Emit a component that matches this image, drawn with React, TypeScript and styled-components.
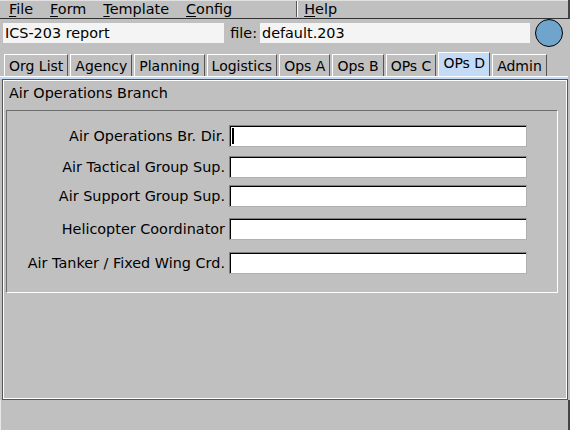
import styled, { createGlobalStyle } from 'styled-components'

const Global = createGlobalStyle`
  html, body {
    margin: 0;
    padding: 0;
    background: #c0c0c0;
  }
  body {
    font-family: "DejaVu Sans", "Liberation Sans", sans-serif;
    font-size: 14.4px;
    color: #000;
  }
`

const menus = [
  { key: 'F', rest: 'ile' },
  { key: 'F', rest: 'orm' },
  { key: 'T', rest: 'emplate' },
  { key: 'C', rest: 'onfig' },
]

const tabs = ['Org List', 'Agency', 'Planning', 'Logistics', 'Ops A', 'Ops B', 'OPs C', 'OPs D', 'Admin']

const fields = [
  { label: 'Air Operations Br. Dir.', top: 14, focus: true },
  { label: 'Air Tactical Group Sup.', top: 9 },
  { label: 'Air Support Group Sup.', top: 7 },
  { label: 'Helicopter Coordinator', top: 11 },
  { label: 'Air Tanker / Fixed Wing Crd.', top: 12 },
]

const App = () => {
  return (
    <Window>
      <Global />
      <MenuBar>
        {menus.map((m) => (
          <MenuItem key={m.key + m.rest}>
            <u>{m.key}</u>
            {m.rest}
          </MenuItem>
        ))}
        <MenuDivider />
        <MenuItem $left={6}>
          <u>H</u>elp
        </MenuItem>
      </MenuBar>

      <TopRow>
        <FlatInput $width={221}>ICS-203 report</FlatInput>
        <FileLabel>file:</FileLabel>
        <FlatInput $width={270}>default.203</FlatInput>
        <Status />
      </TopRow>

      <TabBar>
        {tabs.map((t) => (
          <Tab key={t} $active={t === 'OPs D'}>
            {t}
          </Tab>
        ))}
      </TabBar>
      <TabStrip />

      <Panel>
        <PanelTitle>Air Operations Branch</PanelTitle>
        <Group>
          {fields.map((f) => (
            <Row key={f.label} $top={f.top}>
              <Label>{f.label}</Label>
              <Field>{f.focus && <Caret />}</Field>
            </Row>
          ))}
        </Group>
      </Panel>
      <Footer />
    </Window>
  )
}

export default App

const Window = styled.div`
  width: 570px;
  height: 430px;
  background: #c0c0c0;
  display: flex;
  flex-direction: column;
  overflow: hidden;
`

const MenuBar = styled.div`
  height: 18px;
  display: flex;
  align-items: center;
  padding-left: 1px;
  border-bottom: 1px solid #333;
  border-right: 2px solid #444;
  box-shadow: inset 0 1px 0 #e0e0e0;
`

const MenuItem = styled.div<{ $left?: number }>`
  padding: 0 9px 0 ${(p) => p.$left ?? 8}px;
  line-height: 18px;
  u {
    text-decoration: underline;
    text-underline-offset: 2px;
  }
`

const MenuDivider = styled.div`
  width: 1px;
  height: 16px;
  background: #555;
  border-right: 1px solid #fff;
  margin-left: 55px;
`

const TopRow = styled.div`
  height: 28px;
  display: flex;
  align-items: center;
  padding-left: 3px;
`

const FlatInput = styled.div<{ $width: number }>`
  width: ${(p) => p.$width}px;
  height: 20px;
  line-height: 20px;
  background: #f4f4f4;
  padding-left: 2px;
  box-sizing: border-box;
`

const FileLabel = styled.div`
  width: 36px;
  text-align: right;
  padding-right: 3px;
  box-sizing: border-box;
`

const Status = styled.div`
  width: 26px;
  height: 26px;
  border-radius: 50%;
  background: #6fa5cd;
  border: 1px solid #000;
  margin-left: 5px;
`

const TabBar = styled.div`
  height: 29px;
  display: flex;
  align-items: flex-end;
  padding-left: 4px;
  gap: 2px;
`

const Tab = styled.div<{ $active?: boolean }>`
  height: ${(p) => (p.$active ? 24 : 22)}px;
  line-height: ${(p) => (p.$active ? 20 : 22)}px;
  padding: 0 4px;
  font-size: 14px;
  background: ${(p) => (p.$active ? '#c4dbf7' : '#c0c0c0')};
  border-top: 1px solid #fff;
  border-left: 1px solid #fff;
  border-right: 1px solid #555;
  box-sizing: border-box;
  white-space: nowrap;
`

const TabStrip = styled.div`
  height: 2px;
  background: #c4dbf7;
  margin-right: 2px;
  border-top: 1px solid #fff;
`

const Panel = styled.div`
  height: 321px;
  margin: 0 2px;
  border: 1px solid #555;
  box-shadow: inset 1px 1px 0 #fff, inset -1px -1px 0 #fff;
  box-sizing: border-box;
  padding: 3px 9px 0 3px;
  display: flex;
  flex-direction: column;
`

const PanelTitle = styled.div`
  height: 20px;
  line-height: 20px;
  padding-left: 3px;
`

const Group = styled.div`
  height: 183px;
  margin-top: 7px;
  border-top: 1px solid #6e6e6e;
  border-left: 1px solid #6e6e6e;
  border-bottom: 1px solid #fff;
  border-right: 1px solid #fff;
  box-sizing: border-box;
  display: flex;
  flex-direction: column;
`

const Row = styled.div<{ $top: number }>`
  display: flex;
  align-items: center;
  margin-top: ${(p) => p.$top}px;
  height: 22px;
`

const Label = styled.div`
  width: 222px;
  text-align: right;
  padding-right: 4px;
  box-sizing: border-box;
  white-space: nowrap;
`

const Field = styled.div`
  width: 298px;
  height: 22px;
  background: #fff;
  box-sizing: border-box;
  border-top: 1px solid #808080;
  border-left: 1px solid #808080;
  border-bottom: 1px solid #b0b0b0;
  border-right: 1px solid #b0b0b0;
  box-shadow: inset 1px 1px 0 #000;
  display: flex;
  align-items: center;
  padding-left: 2px;
`

const Caret = styled.div`
  width: 2px;
  height: 16px;
  background: #000;
`

const Footer = styled.div`
  flex: 1;
  border-right: 2px solid #444;
  border-left: 1px solid #e8e8e8;
`
